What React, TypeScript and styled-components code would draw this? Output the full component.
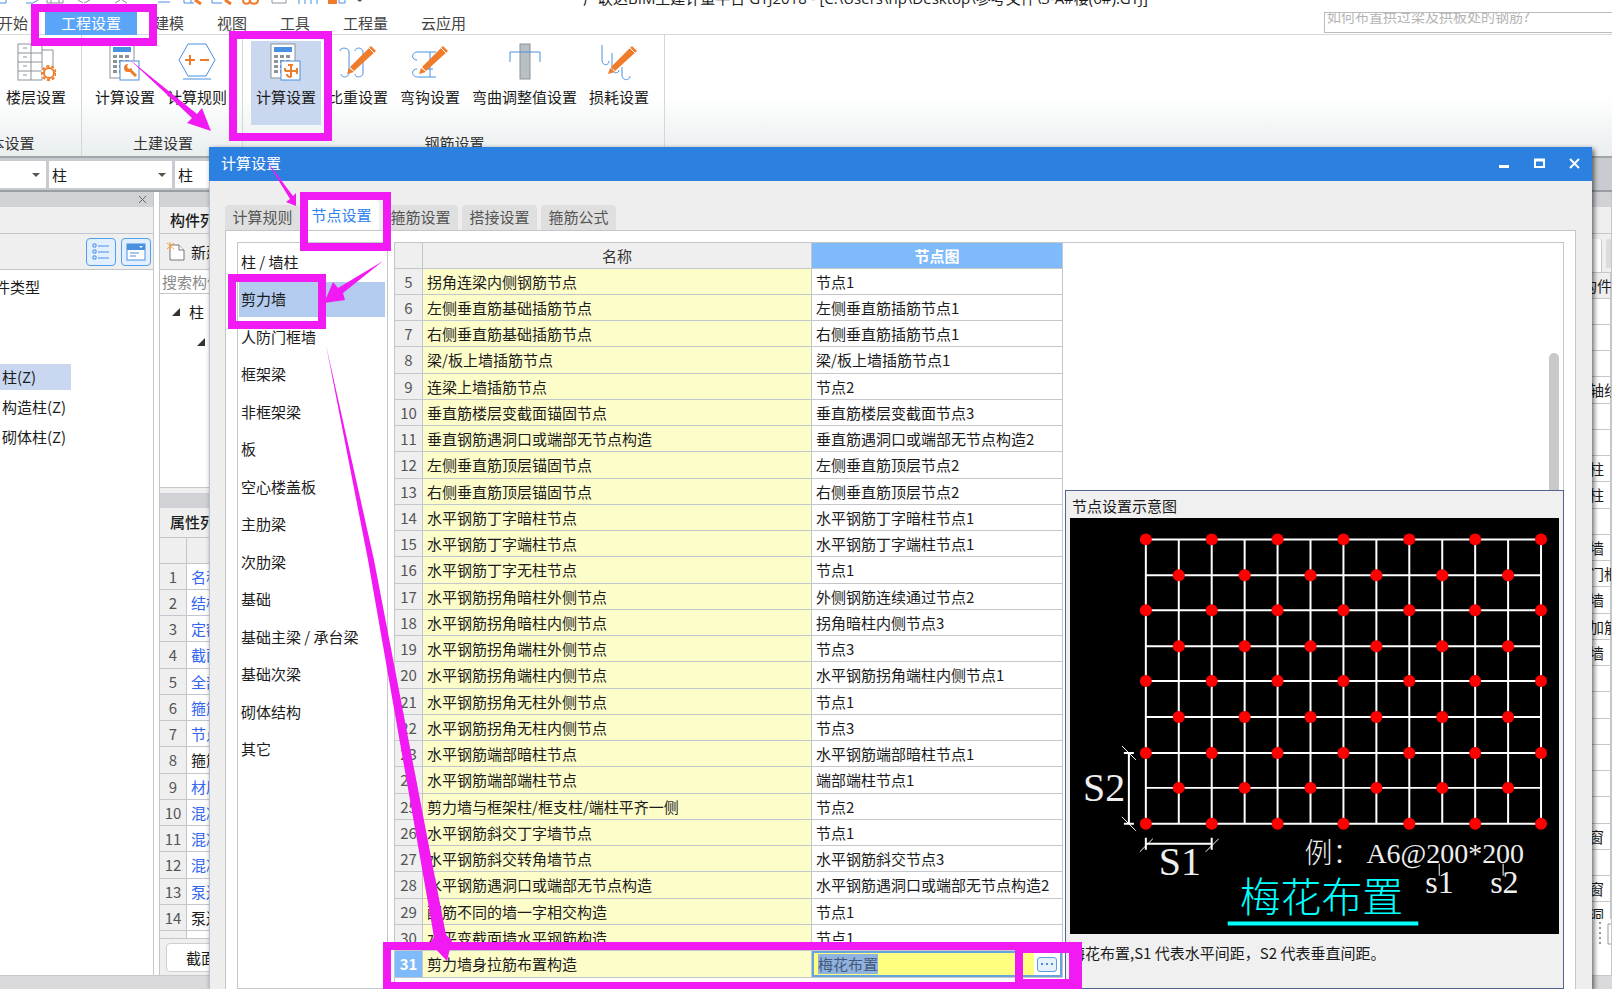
import React from "react";
import styled, { createGlobalStyle } from "styled-components";

const GlobalStyle = createGlobalStyle`
  * { box-sizing: border-box; }
  html, body { margin: 0; padding: 0; height: 100%; overflow: hidden; }
  body {
    font-family: "Noto Sans CJK SC", "Noto Sans", sans-serif;
    font-size: 15px;
    line-height: 20px;
    color: #1c1c1c;
    background: #fff;
  }
  button, input, select { font: inherit; color: inherit; }
  ul { list-style: none; margin: 0; padding: 0; }
  h1, h2, p, figure { margin: 0; font-size: 15px; font-weight: 400; }
`;

const line = "#c3c6ca";
const chrome = "#efefef";
const blue = "#4a90e2";
const orange = "#ee7c2b";

/* ---------- main window ---------- */

const Desktop = styled.div`
  position: relative;
  height: 100vh;
  overflow: hidden;
`;

const MainWindow = styled.div`
  display: flex;
  flex-direction: column;
  height: 100%;
`;

const TitleRow = styled.header`
  display: flex;
  height: 12px;
  overflow: hidden;
`;

const QuickAccess = styled.svg`
  flex: 0 0 583px;
  height: 12px;
`;

const AppTitle = styled.h1`
  margin-top: -12px;
  font-family: "Open Sans", "Noto Sans CJK SC", sans-serif;
  white-space: nowrap;
`;

const MenuRow = styled.nav`
  display: flex;
  justify-content: space-between;
  height: 23px;
  border-bottom: 1px solid #d6d9db;
`;

const MenuTabs = styled.div`
  display: flex;
  gap: 1px;
  margin-left: -18px;
`;

const MenuTab = styled.button<{ $active?: boolean }>`
  display: block;
  border: 0;
  padding: 0 16px 2px;
  height: 23px;
  line-height: 20px;
  white-space: nowrap;
  background: ${(p) => (p.$active ? "#5ba5f8" : "transparent")};
  color: ${(p) => (p.$active ? "#fff" : "#444")};
`;

const HelpSearch = styled.input`
  width: 296px;
  height: 21px;
  margin-right: -8px;
  padding: 0 0 14px 2px;
  border: 1px solid #bbb;
  border-radius: 0;
  background: #fff;
  font-size: 14px;
  line-height: 20px;
  &::placeholder { color: #b4b4b4; }
`;

const Ribbon = styled.div`
  display: flex;
  height: 123px;
  margin-left: -74px;
  border-bottom: 2px solid #a3a7aa;
  background: linear-gradient(#fff 50%, #e9eeee 100%);
`;

const RibbonGroup = styled.section<{ $wide?: boolean }>`
  display: flex;
  flex-direction: column;
  justify-content: space-between;
  width: ${(p) => (p.$wide ? "156px" : "auto")};
  padding: 6px 10px 3px 8px;
  border-right: 1px solid #d3d7d9;
`;

const RibbonButtons = styled.div`
  display: flex;
  justify-content: flex-end;
  gap: 2px;
`;

const RibbonButton = styled.button<{ $active?: boolean }>`
  display: flex;
  flex-direction: column;
  align-items: center;
  gap: 6px;
  height: 84px;
  padding: 2px 5px;
  border: 0;
  line-height: 20px;
  white-space: nowrap;
  background: ${(p) => (p.$active ? "#c9d8ef" : "transparent")};
`;

const GroupName = styled.span`
  padding-left: 4px;
  text-align: center;
  color: #333;
`;

const FilterRow = styled.div`
  display: flex;
  gap: 3px;
  height: 34px;
  padding: 3px 0 2px;
  border-bottom: 2px solid #9a9ea2;
  background: #c8ccd0;
`;

const Combo = styled.label<{ $width: number }>`
  display: flex;
  align-items: center;
  width: ${(p) => p.$width}px;
  background: #fff;
  &::after {
    content: "";
    margin: 0 6px;
    border: 4px solid transparent;
    border-top-color: #555;
    border-bottom: 0;
  }
`;

const ComboSelect = styled.select`
  flex: 1;
  min-width: 0;
  padding: 0 3px;
  border: 0;
  appearance: none;
  background: transparent;
`;

const Workspace = styled.div`
  display: flex;
  gap: 5px;
  flex: 1;
  min-height: 0;
`;

const Column = styled.section<{ $width?: number }>`
  display: flex;
  flex-direction: column;
  flex: ${(p) => (p.$width ? `0 0 ${p.$width}px` : "1")};
  min-width: 0;
  overflow: hidden;
  border: 0 solid ${line};
  border-right-width: 1px;
  border-left-width: ${(p) => (p.$width ? 0 : "1px")};
  background: #fff;
`;

const DockStrip = styled.div`
  display: flex;
  justify-content: flex-end;
  align-items: center;
  flex: none;
  height: 15px;
  padding-right: 6px;
  background: #d0d2d6;
`;

const IconButton = styled.button`
  display: flex;
  padding: 0;
  border: 0;
  background: transparent;
`;

const PanelTitle = styled.h2<{ $height: number }>`
  flex: none;
  height: ${(p) => p.$height}px;
  padding-left: 10px;
  line-height: ${(p) => p.$height - 2}px;
  font-weight: 500;
  border-bottom: 1px solid ${line};
  background: ${chrome};
`;

const PanelTools = styled.div<{ $end?: boolean }>`
  display: flex;
  flex: none;
  align-items: center;
  justify-content: ${(p) => (p.$end ? "flex-end" : "flex-start")};
  gap: 5px;
  height: 36px;
  padding: 0 2px 0 7px;
  border-bottom: 1px solid ${line};
  background: ${chrome};
`;

const ViewToggle = styled.button`
  display: flex;
  align-items: center;
  justify-content: center;
  width: 30px;
  height: 28px;
  padding: 0;
  border: 1px solid #4f9fee;
  border-radius: 4px;
  background: #e2effc;
`;

const ToolButton = styled.button`
  display: flex;
  align-items: center;
  gap: 6px;
  padding: 0;
  border: 0;
  background: transparent;
  white-space: nowrap;
`;

const TypeHeading = styled.h2`
  margin: 7px 0 67px -50px;
`;

const TypeItem = styled.li<{ $active?: boolean }>`
  width: 71px;
  height: 26px;
  margin-bottom: 4px;
  padding-left: 2px;
  line-height: 26px;
  white-space: nowrap;
  background: ${(p) => (p.$active ? "#c9d8f0" : "transparent")};
`;

const PartSearch = styled.input`
  flex: none;
  height: 24px;
  padding: 0 2px;
  border: 0;
  border-bottom: 1px solid ${line};
  &::placeholder { color: #8a8a8a; }
`;

const Tree = styled.ul`
  flex: none;
  height: 194px;
  padding: 3px 12px;
  border-bottom: 1px solid ${line};
`;

const TreeItem = styled.li<{ $depth: number }>`
  display: flex;
  align-items: center;
  gap: 9px;
  height: 30px;
  padding-left: ${(p) => p.$depth * 25}px;
`;

const DockGap = styled.div`
  flex: none;
  height: 5px;
  background: ${chrome};
`;

const tableBase = `
  border-collapse: separate;
  border-spacing: 0;
  table-layout: fixed;
  width: 100%;
  th, td {
    height: 26px;
    padding: 0 4px;
    line-height: 20px;
    text-align: left;
    font-weight: 400;
    white-space: nowrap;
    border: 0 solid ${line};
    border-width: 0 1px 1px 0;
  }
  tbody tr:nth-child(4n) > * { height: 27px; }
`;

const PropertyTable = styled.table`
  ${tableBase}
  tbody th { text-align: center; padding: 0; color: #555; background: ${chrome}; }
  thead th { background: ${chrome}; }
`;

const PropertyCell = styled.td<{ $plain?: boolean }>`
  color: ${(p) => (p.$plain ? "#1c1c1c" : "#3366ee")};
`;

const PropertyScroll = styled.div`
  flex: 1;
  min-height: 0;
  overflow: hidden;
  border-bottom: 1px solid ${line};
`;

const PropertyFooter = styled.div`
  flex: none;
  height: 36px;
  padding: 4px 6px;
  background: ${chrome};
`;

const EditButton = styled.button`
  height: 29px;
  padding: 0 19px;
  border: 1px solid #cfcfcf;
  border-radius: 4px;
  background: #fff;
`;

const SideTabs = styled.div`
  display: flex;
  flex: none;
  align-items: flex-start;
  gap: 4px;
  height: 39px;
  padding-top: 5px;
  border-bottom: 1px solid ${line};
  background: ${chrome};
`;

const SideTab = styled.span<{ $active?: boolean }>`
  flex: none;
  width: 70px;
  height: ${(p) => (p.$active ? 33 : 29)}px;
  border-radius: 3px 3px 0 0;
  background: ${(p) => (p.$active ? "#fff" : "#dcdcdc")};
  border-right: ${(p) => (p.$active ? `1px solid ${line}` : 0)};
`;

const SideTable = styled.table`
  ${tableBase}
  td { padding-left: 27px; }
  th { padding-left: 50px; background: ${chrome}; }
`;

const SideScroll = styled.div`
  flex: 1;
  min-height: 0;
  overflow: hidden;
`;

const SideFooter = styled.div`
  display: flex;
  flex: none;
  gap: 8px;
  justify-content: flex-end;
  height: 56px;
  padding-top: 3px;
`;

const StatusBar = styled.footer`
  flex: none;
  height: 14px;
  border-top: 1px solid #c9c9c9;
  background: #dadadc;
`;

/* ---------- settings dialog ---------- */

const Dialog = styled.div`
  position: absolute;
  top: 147px;
  right: 20px;
  bottom: 0;
  left: 209px;
  display: flex;
  flex-direction: column;
  background: #eeeeee;
  border-left: 1px solid #b9c3d0;
  box-shadow: 2px 2px 5px rgba(0, 0, 0, 0.6);
`;

const DialogBar = styled.header`
  display: flex;
  align-items: center;
  justify-content: space-between;
  flex: none;
  height: 34px;
  margin-left: -1px;
  padding: 0 12px 2px;
  color: #fff;
  background: #2b80e0;
`;

const WindowButtons = styled.div`
  display: flex;
  gap: 24px;
`;

const DialogTabs = styled.div`
  display: flex;
  flex: none;
  align-items: flex-end;
  gap: 4px;
  height: 49px;
  padding-left: 15px;
`;

const DialogTab = styled.button<{ $active?: boolean }>`
  width: 75px;
  height: ${(p) => (p.$active ? 30 : 25)}px;
  padding: 0 0 1px;
  border: 0;
  border-radius: 4px 4px 0 0;
  white-space: nowrap;
  background: ${(p) => (p.$active ? "#fff" : "#dfdfdf")};
  color: ${(p) => (p.$active ? "#2f82ee" : "#555")};
`;

const DialogPage = styled.div`
  display: flex;
  flex: 1;
  min-height: 0;
  gap: 6px;
  margin: 0 16px 0 15px;
  padding: 11px 11px 0;
  border: 1px solid ${line};
  border-bottom: 0;
  background: #fff;
`;

const CategoryList = styled.ul`
  flex: 0 0 151px;
  padding: 2px 2px 0 1px;
  border: 1px solid ${line};
`;

const Category = styled.li<{ $active?: boolean }>`
  height: 35px;
  margin-bottom: 2px;
  padding-left: 2px;
  line-height: 34px;
  background: ${(p) => (p.$active ? "#b2cbee" : "transparent")};
  &:nth-child(even) { margin-bottom: 3px; }
`;

const NodeArea = styled.div`
  display: flex;
  flex: 1;
  min-width: 0;
  gap: 2px;
  border: 1px solid ${line};
  border-right: 0;
  border-bottom: 0;
`;

const NodeTableBox = styled.div`
  flex: 0 0 668px;
`;

const NodeTable = styled.table`
  ${tableBase}
  th { padding: 0; text-align: center; background: ${chrome}; color: #555; }
  thead th { height: 26px; color: #333; }
`;

const ValueHead = styled.th`
  && {
    color: #fff;
    font-weight: 700;
    background: #7fbafa;
  }
`;

const RowNumber = styled.th<{ $active?: boolean }>`
  && {
    color: ${(p) => (p.$active ? "#fff" : "#555")};
    font-weight: ${(p) => (p.$active ? 700 : 400)};
    background: ${(p) => (p.$active ? "#7fbafa" : chrome)};
  }
`;

const NameCell = styled.td`
  background: #fdfdca;
`;

const EditCell = styled.td`
  && { padding: 0; }
`;

const Editor = styled.div`
  display: flex;
  align-items: center;
  height: 26px;
  padding-left: 4px;
  border: 2px solid #69a3dc;
  background: #ffff80;
`;

const EditorInput = styled.input`
  width: 60px;
  height: 20px;
  padding: 0;
  border: 0;
  margin-right: auto;
  color: #44597a;
  background: #8fb2de;
`;

const MoreBox = styled.div`
  display: flex;
  align-items: center;
  justify-content: center;
  width: 26px;
  height: 22px;
  background: #fff;
`;

const MoreButton = styled.button`
  display: flex;
  align-items: center;
  justify-content: center;
  width: 20px;
  height: 15px;
  padding: 0;
  border: 1px solid #5a9fe4;
  border-radius: 3px;
  background: #e6f1fc;
`;

const PreviewColumn = styled.div`
  display: flex;
  flex-direction: column;
  flex: 1;
  min-width: 0;
`;

const ScrollTrack = styled.div`
  display: flex;
  flex: 1;
  justify-content: flex-end;
  padding: 110px 4px 0 0;
  border-right: 1px solid ${line};
`;

const ScrollThumb = styled.div`
  width: 10px;
  border-radius: 5px 5px 0 0;
  background: #c9c9c9;
`;

const Preview = styled.figure`
  flex: none;
  height: 499px;
  padding: 0 4px;
  border: 1px solid #51658f;
  background: #f0f0f0;
`;

const PreviewTitle = styled.figcaption`
  height: 27px;
  padding: 5px 2px 0;
`;

const PreviewArt = styled.svg`
  display: block;
  width: 100%;
  height: 416px;
  background: #000;
`;

const PreviewNote = styled.p`
  padding-top: 9px;
`;

const Annotations = styled.svg`
  position: absolute;
  top: 0;
  left: 0;
  width: 100%;
  height: 100%;
  pointer-events: none;
`;

/* ---------- data ---------- */

const categories = [
  "柱 / 墙柱", "剪力墙", "人防门框墙", "框架梁", "非框架梁", "板", "空心楼盖板",
  "主肋梁", "次肋梁", "基础", "基础主梁 / 承台梁", "基础次梁", "砌体结构", "其它",
];

const nodes: [string, string][] = [
  ["拐角连梁内侧钢筋节点", "节点1"],
  ["左侧垂直筋基础插筋节点", "左侧垂直筋插筋节点1"],
  ["右侧垂直筋基础插筋节点", "右侧垂直筋插筋节点1"],
  ["梁/板上墙插筋节点", "梁/板上墙插筋节点1"],
  ["连梁上墙插筋节点", "节点2"],
  ["垂直筋楼层变截面锚固节点", "垂直筋楼层变截面节点3"],
  ["垂直钢筋遇洞口或端部无节点构造", "垂直筋遇洞口或端部无节点构造2"],
  ["左侧垂直筋顶层锚固节点", "左侧垂直筋顶层节点2"],
  ["右侧垂直筋顶层锚固节点", "右侧垂直筋顶层节点2"],
  ["水平钢筋丁字暗柱节点", "水平钢筋丁字暗柱节点1"],
  ["水平钢筋丁字端柱节点", "水平钢筋丁字端柱节点1"],
  ["水平钢筋丁字无柱节点", "节点1"],
  ["水平钢筋拐角暗柱外侧节点", "外侧钢筋连续通过节点2"],
  ["水平钢筋拐角暗柱内侧节点", "拐角暗柱内侧节点3"],
  ["水平钢筋拐角端柱外侧节点", "节点3"],
  ["水平钢筋拐角端柱内侧节点", "水平钢筋拐角端柱内侧节点1"],
  ["水平钢筋拐角无柱外侧节点", "节点1"],
  ["水平钢筋拐角无柱内侧节点", "节点3"],
  ["水平钢筋端部暗柱节点", "水平钢筋端部暗柱节点1"],
  ["水平钢筋端部端柱节点", "端部端柱节点1"],
  ["剪力墙与框架柱/框支柱/端柱平齐一侧", "节点2"],
  ["水平钢筋斜交丁字墙节点", "节点1"],
  ["水平钢筋斜交转角墙节点", "水平钢筋斜交节点3"],
  ["水平钢筋遇洞口或端部无节点构造", "水平钢筋遇洞口或端部无节点构造2"],
  ["配筋不同的墙一字相交构造", "节点1"],
  ["水平变截面墙水平钢筋构造", "节点1"],
];

const properties = [
  "名称", "结构类别", "定额类别", "截面宽度", "全部纵筋", "箍筋", "节点区箍筋",
  "箍筋肢数", "材质", "混凝土类型", "混凝土强度", "混凝土外加剂", "泵送类型", "泵送高度",
];
const plainProperties = ["箍筋肢数", "泵送高度"];

const sideRows = [
  "", "", "", "辅助轴线", "", "", "构造柱", "砌体柱", "", "剪力墙", "人防门框墙", "砌体墙",
  "砌体加筋", "保温墙", "", "", "", "", "", "", "带形窗", "", "老虎窗", "带形洞",
];

/* ---------- icons ---------- */

const Pencil = () => (
  <g>
    <path d="M12 24 L33 3 L38 8 L16 28 Z" fill={orange} />
    <path d="M9 31 L11 25 L16 29 Z" fill={orange} />
    <path d="M31 5 L36 10" stroke="#fff" strokeWidth="1" />
  </g>
);

const Calculator = () => (
  <g>
    <rect x="5" y="1" width="24" height="34" fill="#fff" stroke="#8b9299" />
    <rect x="8" y="4" width="18" height="5" fill={blue} />
    {[12, 17, 22, 27].map((y) =>
      [8, 14, 20].map((x) => <rect key={`${x}-${y}`} x={x} y={y} width="4" height="3" fill="#8b9299" />)
    )}
    <rect x="15" y="18" width="19" height="19" fill="#fff" stroke={blue} />
  </g>
);

const RibbonIcon = ({ kind }: { kind: string }) => (
  <svg width="40" height="38" viewBox="0 0 40 38" fill="none" aria-hidden="true">
    {kind === "floors" && (
      <g stroke="#8b9299">
        <rect x="2" y="1" width="24" height="36" fill="#fff" />
        <path d="M2 10H26M2 19H26M2 28H26M15 1V37M7 5H11M7 14H11M7 23H11M7 32H11M26 7H37V24" />
        <circle cx="33" cy="30" r="8" fill="#fff" stroke="none" />
        <circle cx="33" cy="30" r="5" stroke={orange} strokeWidth="2" />
        <circle cx="33" cy="30" r="7" stroke={orange} strokeWidth="2" strokeDasharray="3 2" />
      </g>
    )}
    {kind === "civil" && (
      <g>
        <Calculator />
        <path d="M31 33L25 27" stroke={orange} strokeWidth="3" />
        <path d="M23 21A4 4 0 1 0 27 25L24 26L22 24Z" fill={orange} />
      </g>
    )}
    {kind === "rules" && (
      <g>
        <path d="M11 1H29L38 17L29 33H11L2 17Z" fill="#fff" stroke={blue} />
        <path d="M6 36H34" stroke={blue} />
        <path d="M8 17H18M13 12V22M23 17H32" stroke={orange} strokeWidth="2" />
      </g>
    )}
    {kind === "rebar" && (
      <g>
        <Calculator />
        <path d="M25 21V34M19 28H31M22 22H27M31 25V31M19 25V28M25 34C21 34 21 32 21 31" stroke={orange} strokeWidth="2" />
      </g>
    )}
    {kind === "weight" && (
      <g>
        <path d="M2 8C2 4 11 4 11 9V30C11 35 3 35 3 31M17 8C17 4 25 4 25 9V30C25 35 17 35 17 31" stroke={blue} />
        <Pencil />
      </g>
    )}
    {kind === "hook" && (
      <g>
        <path d="M26 9H8C1 9 1 17 7 17M26 34H8C1 34 1 26 7 26M20 9V34M17 26H23" stroke={blue} />
        <Pencil />
      </g>
    )}
    {kind === "bend" && (
      <g>
        <rect x="15" y="1" width="10" height="35" fill="#b9c0c4" stroke="#8b9299" />
        <path d="M5 19V9H35V19" stroke={blue} />
      </g>
    )}
    {kind === "loss" && (
      <g>
        <path d="M3 2V17C3 23 10 23 10 18M13 10V25C13 31 20 31 20 27M23 24V32C23 38 31 38 31 33" stroke={blue} />
        <Pencil />
      </g>
    )}
  </svg>
);

const ribbon = [
  { name: "基本设置", wide: true, items: [["楼层设置", "floors"]] },
  { name: "土建设置", items: [["计算设置", "civil"], ["计算规则", "rules"]] },
  {
    name: "钢筋设置",
    items: [["计算设置", "rebar"], ["比重设置", "weight"], ["弯钩设置", "hook"], ["弯曲调整值设置", "bend"], ["损耗设置", "loss"]],
  },
];

const QuickIcons = () => (
  <QuickAccess aria-hidden="true" fill="none" stroke={blue}>
    <path d="M0 3H6V0M26 3H33L38 0" />
    <path d="M47 0V3H63V0M51 0V3M59 0V3M78 0L83 3M90 0L84 3M115 3L120 0M127 3L122 0" stroke="#8b9299" />
    <path d="M158 2H170M184 0V3H194M191 0V3M212 0V3H222M299 0V4M305 0V4M311 0V4M317 0V4M339 0V3H345V0" />
    <path d="M195 0L201 4M225 0L231 4" stroke={orange} strokeWidth="3" />
    <path d="M243 0C243 5 250 5 250 0C250 5 258 5 258 0" stroke={orange} strokeWidth="2" />
    <path d="M272 0V3H286V0" stroke="#8b9299" />
    <rect x="328" y="0" width="9" height="4" fill={orange} stroke="none" />
    <path d="M357 0H362L360 2Z" fill="#555" stroke="none" />
  </QuickAccess>
);

const Expander = () => (
  <svg width="8" height="8" aria-hidden="true"><path d="M0 8L8 0V8Z" fill="#333" /></svg>
);

/* ---------- preview drawing ---------- */

const gridX = Array.from({ length: 13 }, (_, i) => 76 + i * 33);
const gridY = Array.from({ length: 9 }, (_, i) => Math.round(21 + i * 35.6));

const PlumPattern = () => (
  <PreviewArt viewBox="0 0 490 416" preserveAspectRatio="xMidYMid meet" role="img" aria-label="梅花布置">
    <g stroke="#fff" strokeWidth="2">
      {gridX.map((x) => <path key={x} d={`M${x} 21V306`} />)}
      {gridY.map((y) => <path key={y} d={`M76 ${y}H472`} />)}
    </g>
    <g fill="#f00">
      {gridY.flatMap((y, r) =>
        gridX.filter((_, c) => c % 2 === r % 2).map((x) => <circle key={`${x}-${y}`} cx={x} cy={y} r="6" />)
      )}
    </g>
    <g stroke="#fff" fill="none">
      <path d="M59 235V306M54 235H64M54 306H64M76 326H142M76 320V332M142 320V332" strokeWidth="2" />
      <path d="M52 228L66 242M52 299L66 313M70 334L83 321M136 334L149 321M370 346V358M434 346V358" strokeWidth="1" />
    </g>
    <g fill="#eee" fontFamily="'Liberation Serif', 'Noto Sans CJK SC', serif">
      <text x="13" y="283" fontSize="40">S2</text>
      <text x="89" y="357" fontSize="40">S1</text>
      <text x="235" y="345" fontSize="28" fontWeight="300" fontFamily="'Noto Sans CJK SC', sans-serif">例：</text>
      <text x="297" y="345" fontSize="28">A6@200*200</text>
      <text x="356" y="375" fontSize="32">s1</text>
      <text x="421" y="375" fontSize="32">s2</text>
    </g>
    <text x="170" y="394" fontSize="41" fontWeight="300" fontFamily="'Noto Sans CJK SC', sans-serif" fill="#0ff">梅花布置</text>
    <path d="M158 406H349" stroke="#0ff" strokeWidth="4" />
  </PreviewArt>
);

const magenta = "#f21af2";

export default function App() {
  return (
    <Desktop>
      <GlobalStyle />
      <MainWindow>
        <TitleRow>
          <QuickIcons />
          <AppTitle>广联达BIM土建计量平台 GTJ2018 - [C:\Users\hp\Desktop\参考文件\3-A#楼(6#).GTJ]</AppTitle>
        </TitleRow>
        <MenuRow>
          <MenuTabs>
            {["开始", "工程设置", "建模", "视图", "工具", "工程量", "云应用"].map((t) => (
              <MenuTab key={t} $active={t === "工程设置"}>{t}</MenuTab>
            ))}
          </MenuTabs>
          <HelpSearch aria-label="搜索帮助" placeholder="如何布置拱过梁及拱板处的钢筋?" />
        </MenuRow>
        <Ribbon>
          {ribbon.map((g) => (
            <RibbonGroup key={g.name} $wide={g.wide}>
              <RibbonButtons>
                {g.items.map(([label, kind]) => (
                  <RibbonButton key={kind} $active={kind === "rebar"}>
                    <RibbonIcon kind={kind} />
                    {label}
                  </RibbonButton>
                ))}
              </RibbonButtons>
              <GroupName>{g.name}</GroupName>
            </RibbonGroup>
          ))}
        </Ribbon>
        <FilterRow>
          <Combo $width={46}><ComboSelect aria-label="楼层"><option></option></ComboSelect></Combo>
          <Combo $width={123}><ComboSelect aria-label="构件分类"><option>柱</option></ComboSelect></Combo>
          <Combo $width={123}><ComboSelect aria-label="构件类型"><option>柱</option></ComboSelect></Combo>
        </FilterRow>
        <Workspace>
          <Column $width={154}>
            <DockStrip>
              <IconButton aria-label="关闭面板">
                <svg width="9" height="9" stroke="#666"><path d="M1 1L8 8M8 1L1 8" /></svg>
              </IconButton>
            </DockStrip>
            <PanelTitle $height={27} aria-hidden="true" />
            <PanelTools $end>
              <ViewToggle aria-label="列表视图">
                <svg width="18" height="18" fill="none" stroke={blue}>
                  <path d="M1 1H4V4H1ZM1 7H4V10H1ZM1 13H4V16H1ZM6 3H17M6 9H17M6 15H17" />
                </svg>
              </ViewToggle>
              <ViewToggle aria-label="图标视图">
                <svg width="20" height="18" fill="none" stroke={blue}>
                  <rect x="1" y="1" width="18" height="16" fill="#fff" />
                  <path d="M1 4H19" strokeWidth="6" />
                  <path d="M4 10H13M4 13H10" />
                  <path d="M13 3H17L15 5Z" fill="#fff" stroke="none" />
                </svg>
              </ViewToggle>
            </PanelTools>
            <TypeHeading>常用构件类型</TypeHeading>
            <ul>
              <TypeItem $active>柱(Z)</TypeItem>
              <TypeItem>构造柱(Z)</TypeItem>
              <TypeItem>砌体柱(Z)</TypeItem>
            </ul>
          </Column>
          <Column>
            <DockStrip />
            <PanelTitle $height={27}>构件列表</PanelTitle>
            <PanelTools>
              <ToolButton>
                <svg width="18" height="20" fill="#fff" stroke="#777">
                  <path d="M3 3H12L17 8V18H3Z" />
                  <path d="M12 3V8H17" />
                  <path d="M0 1L7 7M7 1L0 7M3 0V8" stroke="#f5a04a" />
                </svg>
                新建
              </ToolButton>
            </PanelTools>
            <PartSearch aria-label="搜索构件" placeholder="搜索构件..." />
            <Tree>
              <TreeItem $depth={0}><Expander />柱</TreeItem>
              <TreeItem $depth={1}><Expander /></TreeItem>
            </Tree>
            <DockGap />
            <DockStrip />
            <PanelTitle $height={30}>属性列表</PanelTitle>
            <PropertyScroll>
              <PropertyTable>
                <colgroup><col style={{ width: 27 }} /><col /></colgroup>
                <thead><tr><th /><th /></tr></thead>
                <tbody>
                  {properties.map((p, i) => (
                    <tr key={p}>
                      <th scope="row">{i + 1}</th>
                      <PropertyCell $plain={plainProperties.includes(p)}>{p}</PropertyCell>
                    </tr>
                  ))}
                  <tr><th /><td /></tr>
                </tbody>
              </PropertyTable>
            </PropertyScroll>
            <PropertyFooter><EditButton>截面编辑</EditButton></PropertyFooter>
          </Column>
          <Column $width={80}>
            <DockStrip />
            <PanelTitle $height={27} aria-hidden="true" />
            <SideTabs><SideTab $active /><SideTab /></SideTabs>
            <SideScroll>
              <SideTable>
                <thead><tr><th>构件类型</th></tr></thead>
                <tbody>{sideRows.map((r, i) => <tr key={i}><td>{r}</td></tr>)}</tbody>
              </SideTable>
            </SideScroll>
            <SideFooter>
              <svg width="12" height="24" fill="none" stroke="#999" aria-hidden="true">
                <path d="M1 0V24" strokeWidth="2" strokeDasharray="2 3" />
                <path d="M12 2H9V22H12" />
              </svg>
            </SideFooter>
          </Column>
        </Workspace>
        <StatusBar />
      </MainWindow>

      <Dialog role="dialog" aria-labelledby="dialog-title">
        <DialogBar>
          <h2 id="dialog-title">计算设置</h2>
          <WindowButtons>
            <IconButton aria-label="最小化">
              <svg width="11" height="11"><rect x="0" y="7" width="10" height="3" fill="#fff" /></svg>
            </IconButton>
            <IconButton aria-label="最大化">
              <svg width="11" height="11" fill="none" stroke="#fff"><path d="M1 2H10V9H1Z" strokeWidth="2" /><path d="M0 2H11" strokeWidth="3" /></svg>
            </IconButton>
            <IconButton aria-label="关闭">
              <svg width="11" height="11" stroke="#fff" strokeWidth="2"><path d="M1 1L10 10M10 1L1 10" /></svg>
            </IconButton>
          </WindowButtons>
        </DialogBar>
        <DialogTabs role="tablist">
          {["计算规则", "节点设置", "箍筋设置", "搭接设置", "箍筋公式"].map((t) => (
            <DialogTab key={t} role="tab" aria-selected={t === "节点设置"} $active={t === "节点设置"}>{t}</DialogTab>
          ))}
        </DialogTabs>
        <DialogPage>
          <CategoryList>
            {categories.map((c) => <Category key={c} $active={c === "剪力墙"}>{c}</Category>)}
          </CategoryList>
          <NodeArea>
            <NodeTableBox>
              <NodeTable>
                <colgroup><col style={{ width: 28 }} /><col /><col style={{ width: 251 }} /></colgroup>
                <thead>
                  <tr><th /><th scope="col">名称</th><ValueHead scope="col">节点图</ValueHead></tr>
                </thead>
                <tbody>
                  {nodes.map(([name, value], i) => (
                    <tr key={name + i}>
                      <RowNumber scope="row">{i + 5}</RowNumber>
                      <NameCell>{name}</NameCell>
                      <td>{value}</td>
                    </tr>
                  ))}
                  <tr>
                    <RowNumber scope="row" $active>31</RowNumber>
                    <NameCell>剪力墙身拉筋布置构造</NameCell>
                    <EditCell>
                      <Editor>
                        <EditorInput aria-label="节点图" defaultValue="梅花布置" />
                        <MoreBox>
                          <MoreButton aria-label="选择节点图">
                            <svg width="12" height="3" fill={blue}>
                              <rect width="2" height="2" /><rect x="5" width="2" height="2" /><rect x="10" width="2" height="2" />
                            </svg>
                          </MoreButton>
                        </MoreBox>
                      </Editor>
                    </EditCell>
                  </tr>
                </tbody>
              </NodeTable>
            </NodeTableBox>
            <PreviewColumn>
              <ScrollTrack><ScrollThumb /></ScrollTrack>
              <Preview>
                <PreviewTitle>节点设置示意图</PreviewTitle>
                <PlumPattern />
                <PreviewNote>梅花布置,S1 代表水平间距，S2 代表垂直间距。</PreviewNote>
              </Preview>
            </PreviewColumn>
          </NodeArea>
        </DialogPage>
      </Dialog>

      <Annotations aria-hidden="true">
        <g fill="none" stroke={magenta} strokeWidth="8">
          <path d="M35 8H153V42H35Z" />
          <path d="M233 35H328V137H233Z" />
          <path d="M304 196H387V247H304Z" />
          <path d="M232 278H322V325H232Z" />
          <path d="M387 946H1078V986H387Z" />
          <path d="M1019 949H1073V983H1019Z" />
        </g>
        <g fill={magenta}>
          <path d="M129 59L197 114L202 108L211 131L187 123L192 118Z" />
          <path d="M266 160L293 196L296 193L296 206L286 202L290 199Z" />
          <path d="M383 261L343 293L345 300L324 303L333 282L338 288Z" />
          <path d="M326 345L374 560L446 935L452 940L447 961L430 943L434 937L368 560Z" />
        </g>
      </Annotations>
    </Desktop>
  );
}
